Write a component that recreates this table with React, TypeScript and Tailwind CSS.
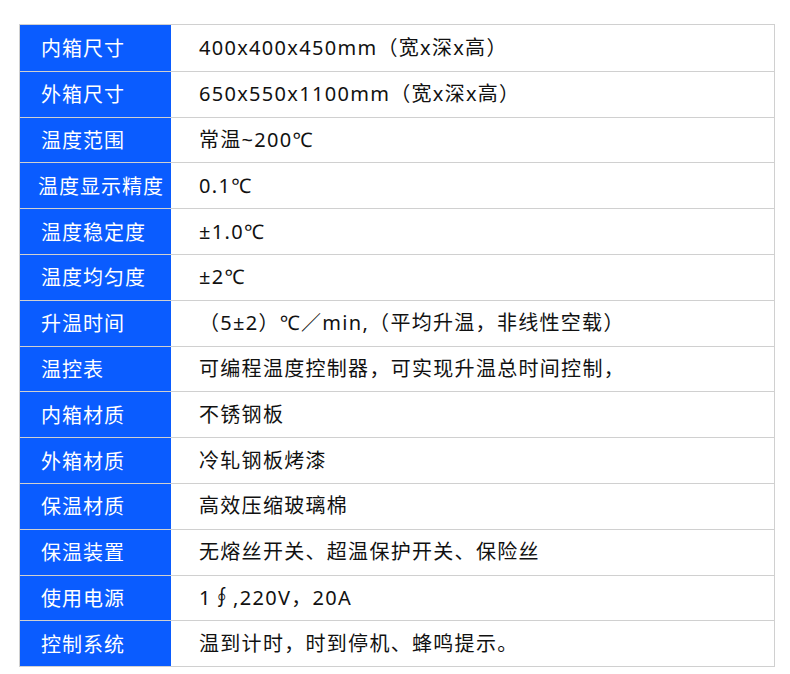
import React from "react";

const specs = [
  { label: "内箱尺寸", value: "400x400x450mm（宽x深x高）" },
  { label: "外箱尺寸", value: "650x550x1100mm（宽x深x高）" },
  { label: "温度范围", value: "常温~200℃" },
  { label: "温度显示精度", value: "0.1℃" },
  { label: "温度稳定度", value: "±1.0℃" },
  { label: "温度均匀度", value: "±2℃" },
  { label: "升温时间", value: "（5±2）℃／min,（平均升温，非线性空载）" },
  { label: "温控表", value: "可编程温度控制器，可实现升温总时间控制，" },
  { label: "内箱材质", value: "不锈钢板" },
  { label: "外箱材质", value: "冷轧钢板烤漆" },
  { label: "保温材质", value: "高效压缩玻璃棉" },
  { label: "保温装置", value: "无熔丝开关、超温保护开关、保险丝" },
  { label: "使用电源", value: "1∮,220V，20A" },
  { label: "控制系统", value: "温到计时，时到停机、蜂鸣提示。" },
];

const App = () => {
  return (
    <div className="w-[790px] h-[674px] bg-white pt-[24px] pl-[19px] font-['Noto_Sans','Noto_Sans_CJK_SC',sans-serif]">
      {/* SPEC TABLE */}
      <div className="w-[756px] border border-[#d0d0d0]">
        {specs.map((item, idx) => (
          <div
            key={idx}
            className={`flex h-[45.8px] ${idx > 0 ? "border-t border-[#d0d0d0]" : ""}`}>
            <div
              className={`w-[151px] shrink-0 bg-[#0a5cff] flex items-center text-white text-[20px] tracking-[1px] font-['Noto_Sans_CJK_SC',sans-serif] ${
                item.label.length > 5 ? "pl-[18px]" : "pl-[21px]"
              }`}>
              {item.label}
            </div>
            <div className="flex-1 flex items-center pl-[28px] text-[#111111] text-[20px] tracking-[1.3px]">
              {item.value}
            </div>
          </div>
        ))}
      </div>
    </div>
  );
};

export default App;
